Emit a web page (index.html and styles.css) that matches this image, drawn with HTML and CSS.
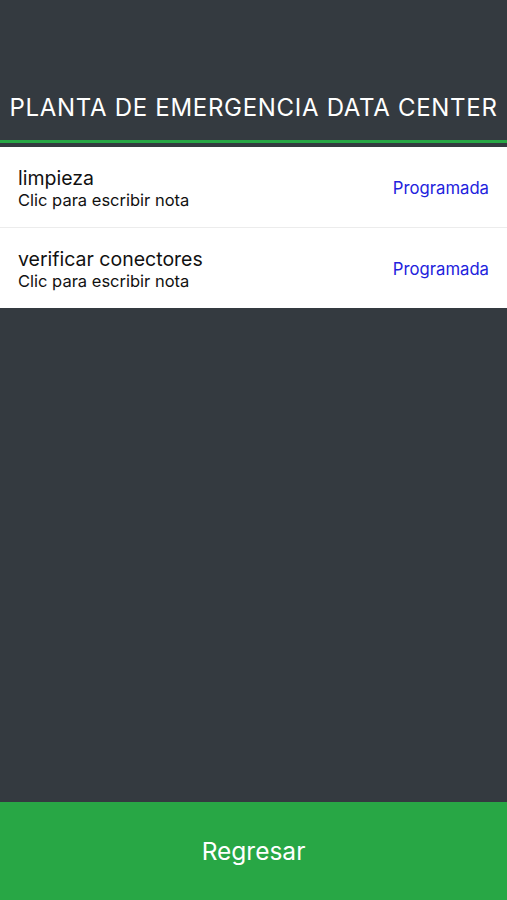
FILE: index.html
```html
<!DOCTYPE html>
<html lang="es">

<head>
    <meta charset="UTF-8">
    <meta name="viewport" content="width=device-width, initial-scale=1.0">
    <title>Planta de emergencia</title>
    <link rel="stylesheet" href="styles.css">
</head>

<body>
    <div class="screen">
        <header class="top-bar">
            <h1 class="title">PLANTA DE EMERGENCIA DATA CENTER</h1>
        </header>

        <ul class="task-list">
            <li class="task">
                <div class="task-text">
                    <span class="task-name">limpieza</span>
                    <span class="task-note">Clic para escribir nota</span>
                </div>
                <span class="task-status">Programada</span>
            </li>
            <li class="task">
                <div class="task-text">
                    <span class="task-name">verificar conectores</span>
                    <span class="task-note">Clic para escribir nota</span>
                </div>
                <span class="task-status">Programada</span>
            </li>
        </ul>

        <div class="spacer"></div>

        <button class="back-btn">Regresar</button>
    </div>
</body>

</html>
```

FILE: styles.css
```css
body {
    margin: 0;
    background-color: #343a40;
    font-family: Inter, "Liberation Sans", Arial, sans-serif;
}

.screen {
    height: 900px;
    display: flex;
    flex-direction: column;
}

.top-bar {
    padding-top: 94px;
    border-bottom: 3px solid #28a745;
    height: 46px;
    margin-bottom: 4px;
}

.title {
    margin: 0;
    color: #ffffff;
    font-size: 24px;
    font-weight: normal;
    letter-spacing: 0.7px;
    text-align: center;
    line-height: 28px;
}

.task-list {
    list-style: none;
    margin: 0;
    padding: 0;
    background-color: #ffffff;
}

.task {
    height: 80px;
    display: flex;
    align-items: center;
    justify-content: space-between;
    padding: 0 18px;
    border-bottom: 1px solid #ececec;
}

.task:last-child {
    border-bottom: none;
}

.task-text {
    display: flex;
    flex-direction: column;
    padding-top: 2px;
}

.task-name {
    font-size: 19.5px;
    color: #111111;
    line-height: 23px;
}

.task-note {
    font-size: 16.5px;
    color: #111111;
    line-height: 20px;
}

.task-status {
    font-size: 16.7px;
    color: #2222dd;
    padding-top: 2px;
}

.spacer {
    flex: 1;
}

.back-btn {
    height: 98px;
    border: none;
    background-color: #28a745;
    color: #ffffff;
    font-family: Inter, "Liberation Sans", Arial, sans-serif;
    font-size: 24.5px;
    padding: 0;
}
```
